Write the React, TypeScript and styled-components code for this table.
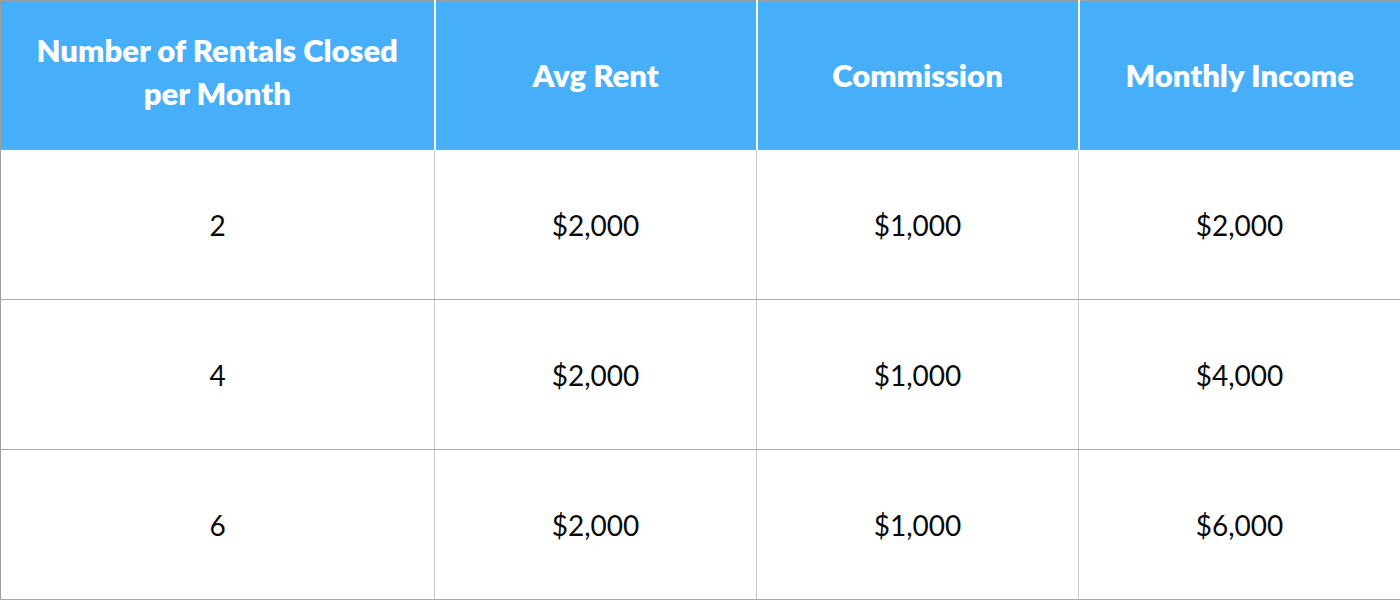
import React from "react";
import styled, { createGlobalStyle } from "styled-components";

const Global = createGlobalStyle`
  html, body { margin: 0; padding: 0; background: #ffffff; }
  body { font-family: Lato, "Open Sans", sans-serif; }
`;

const Table = styled.table`
  width: 1400px;
  border-collapse: collapse;
  table-layout: fixed;
  border: 1px solid #9e9e9e;
`;

const Col = styled.col<{ $w: number }>`
  width: ${(p) => p.$w}px;
`;

const HeadCell = styled.th`
  height: 148px;
  box-sizing: content-box;
  background: #47aff9;
  color: #ffffff;
  font-family: Lato, sans-serif;
  font-weight: 800;
  font-size: 31px;
  line-height: 43px;
  text-align: center;
  vertical-align: middle;
  padding: 0 24px;
  border-left: 2px solid #ffffff;
  border-bottom: 1px solid #9e9e9e;
  &:first-child {
    border-left: none;
    height: 141px;
    padding-bottom: 7px;
  }
`;

const Cell = styled.td`
  height: 149px;
  box-sizing: content-box;
  padding: 0;
  text-align: center;
  vertical-align: middle;
  font-family: Lato, sans-serif;
  font-size: 28px;
  color: #0a0a0a;
  border-left: 1px solid #c8c8c8;
  border-bottom: 1px solid #a8a8a8;
  &:first-child { border-left: none; }
`;

const rows = [
  ["2", "$2,000", "$1,000", "$2,000"],
  ["4", "$2,000", "$1,000", "$4,000"],
  ["6", "$2,000", "$1,000", "$6,000"],
];

export default function App() {
  return (
    <>
      <Global />
      <Table>
        <colgroup>
          <Col $w={434} />
          <Col $w={322} />
          <Col $w={322} />
          <Col $w={322} />
        </colgroup>
        <thead>
          <tr>
            <HeadCell>Number of Rentals Closed per Month</HeadCell>
            <HeadCell>Avg Rent</HeadCell>
            <HeadCell>Commission</HeadCell>
            <HeadCell>Monthly Income</HeadCell>
          </tr>
        </thead>
        <tbody>
          {rows.map((r, i) => (
            <tr key={i}>
              {r.map((c, j) => (
                <Cell key={j}>{c}</Cell>
              ))}
            </tr>
          ))}
        </tbody>
      </Table>
    </>
  );
}
